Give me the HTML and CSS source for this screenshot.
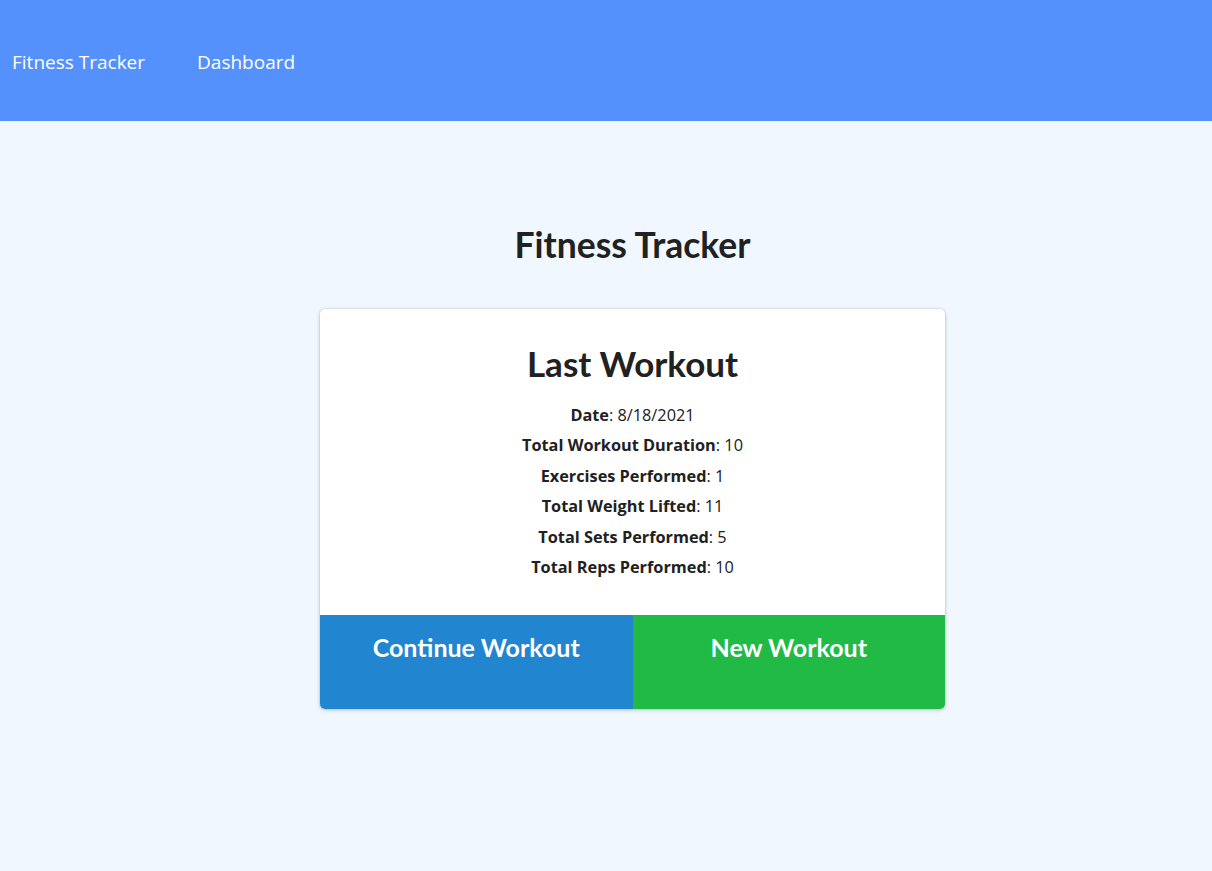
FILE: index.html
```html
<!DOCTYPE html>
<html lang="en">
<head>
<meta charset="utf-8">
<title>Fitness Tracker</title>
<link rel="stylesheet" href="styles.css">
</head>
<body>
<nav class="topnav">
  <a class="navlink" href="#">Fitness Tracker</a>
  <a class="navlink" href="#">Dashboard</a>
</nav>
<main class="page">
  <h1 class="title">Fitness Tracker</h1>
  <section class="card">
    <div class="card-body">
      <h2 class="card-title">Last Workout</h2>
      <ul class="stats">
        <li><strong>Date</strong>: 8/18/2021</li>
        <li><strong>Total Workout Duration</strong>: 10</li>
        <li><strong>Exercises Performed</strong>: 1</li>
        <li><strong>Total Weight Lifted</strong>: 11</li>
        <li><strong>Total Sets Performed</strong>: 5</li>
        <li><strong>Total Reps Performed</strong>: 10</li>
      </ul>
    </div>
    <div class="actions">
      <a class="btn btn-continue" href="#">Continue Workout</a>
      <a class="btn btn-new" href="#">New Workout</a>
    </div>
  </section>
</main>
</body>
</html>
```

FILE: styles.css
```css
* { box-sizing: border-box; }
html, body { margin: 0; padding: 0; }
body {
  background: #f0f7ff;
  color: #212121;
  font-family: "Open Sans", "Noto Sans", sans-serif;
  min-height: 871px;
}
.topnav {
  height: 121px;
  background: #5591fd;
  display: flex;
  align-items: center;
  gap: 52px;
  padding: 3px 12px 0;
}
.navlink {
  color: #ffffff;
  text-decoration: none;
  font-size: 19px;
}
.page {
  display: flex;
  flex-direction: column;
  align-items: center;
  padding-left: 53px;
}
.title {
  font-family: Lato, sans-serif;
  font-weight: 700;
  font-size: 35.5px;
  margin: 103px 0 43px;
  line-height: 42px;
  color: #212121;
}
.card {
  width: 625px;
  background: #fff;
  border-radius: 5px;
  box-shadow: 0 1px 4px 0 rgba(0,0,0,0.2), 0 0 0 1px rgba(34,36,38,0.05);
  overflow: hidden;
}
.card-body {
  padding: 33px 16px 33px;
  text-align: center;
}
.card-title {
  font-family: Lato, sans-serif;
  font-weight: 700;
  font-size: 35px;
  line-height: 42px;
  margin: 0 0 16px;
}
.stats {
  list-style: none;
  margin: 0;
  padding: 0;
  font-size: 16.3px;
  line-height: 30.4px;
}
.stats strong { font-weight: 700; }
.actions {
  display: grid;
  grid-template-columns: 1fr 1fr;
  height: 94px;
}
.btn {
  color: #fff;
  text-decoration: none;
  font-family: Lato, sans-serif;
  font-weight: 700;
  font-size: 25px;
  text-align: center;
  padding-top: 17px;
  line-height: 30px;
}
.btn-continue { background: #2185d0; }
.btn-new { background: #21ba45; }
```
